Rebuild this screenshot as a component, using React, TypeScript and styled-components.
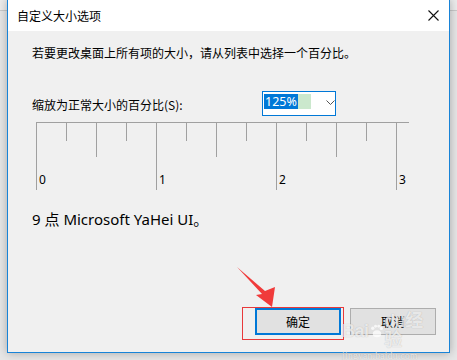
import React from "react";
import styled, { createGlobalStyle } from "styled-components";

const GlobalStyle = createGlobalStyle`
  html, body {
    margin: 0;
    padding: 0;
    width: 457px;
    height: 360px;
    overflow: hidden;
    background: linear-gradient(#ececec 0 10px, #c9c9c9 10px 11px, #e6e6e6 11px);
  }
`;

const CJK = `"Noto Sans CJK SC", "Noto Sans", sans-serif`;

function App() {
  const segments = ["0", "1", "2"];

  return (
    <>
      <GlobalStyle />
      <Page>
        <Dialog>
          <TitleBar>
            <Title>自定义大小选项</Title>
            <CloseIcon width="11" height="11" viewBox="0 0 11 11">
              <path d="M0.5 0.5 L10.5 10.5 M10.5 0.5 L0.5 10.5" stroke="#111" strokeWidth="1.1" />
            </CloseIcon>
          </TitleBar>

          <Body>
            <Intro>若要更改桌面上所有项的大小，请从列表中选择一个百分比。</Intro>

            <ScaleRow>
              <ScaleLabel>缩放为正常大小的百分比(S):</ScaleLabel>
              <Combo>
                <Selected>125%</Selected>
                <SelectTail />
                <Chevron width="9" height="5" viewBox="0 0 9 5">
                  <path d="M0.5 0.5 L4.5 4.5 L8.5 0.5" fill="none" stroke="#555" strokeWidth="1" />
                </Chevron>
              </Combo>
            </ScaleRow>

            <Ruler>
              {segments.map((n) => (
                <Segment key={n}>
                  <Tick $h={18} />
                  <Tick $h={34} />
                  <Tick $h={18} />
                  <RulerLabel>{n}</RulerLabel>
                </Segment>
              ))}
              <Segment $last>
                <RulerLabel>3</RulerLabel>
              </Segment>
            </Ruler>

            <FontInfo>9 点 Microsoft YaHei UI。</FontInfo>

            <ButtonRow>
              <OkWrap>
                <RedBox />
                <Arrow width="50" height="50" viewBox="0 0 50 50">
                  <polygon points="6,5 34,29 44,25 41,45 25,33 31,32" fill="#f03b3b" />
                </Arrow>
                <Button $primary>确定</Button>
              </OkWrap>
              <Button>取消</Button>
              <Watermark aria-hidden="true">
                <MarkBig>
                  Bai
                  <Paw width="15" height="15" viewBox="0 0 15 15">
                    <circle cx="3" cy="4" r="1.8" />
                    <circle cx="6" cy="1.8" r="1.6" />
                    <circle cx="9.5" cy="1.8" r="1.6" />
                    <circle cx="12.3" cy="4.2" r="1.8" />
                    <ellipse cx="7.6" cy="10" rx="4.6" ry="3.8" />
                  </Paw>
                  du经验
                </MarkBig>
                <MarkSmall>jingyan.baidu.com</MarkSmall>
              </Watermark>
            </ButtonRow>
          </Body>
        </Dialog>
      </Page>
    </>
  );
}

const Page = styled.div`
  padding-left: 7px;
  margin-top: -1px;
`;

const Dialog = styled.div`
  box-sizing: border-box;
  width: 443px;
  height: 354px;
  border: 1px solid #1883d7;
  background: #f0f0f0;
  box-shadow: 0 0 9px rgba(0, 0, 0, 0.28);
  display: flex;
  flex-direction: column;
  font-family: ${CJK};
  color: #000;
`;

const TitleBar = styled.div`
  height: 31px;
  background: #fff;
  display: flex;
  align-items: center;
  justify-content: space-between;
  padding: 0 10px 0 9px;
`;

const Title = styled.span`
  font-size: 12px;
  line-height: 16px;
`;

const CloseIcon = styled.svg`
  display: block;
`;

const Body = styled.div`
  flex: 1;
  display: flex;
  flex-direction: column;
  padding: 14px 13px 17px 24px;
`;

const Intro = styled.div`
  font-size: 12px;
  line-height: 16px;
`;

const ScaleRow = styled.div`
  margin-top: 30px;
  display: flex;
  align-items: center;
`;

const ScaleLabel = styled.span`
  width: 230px;
  font-size: 12px;
  line-height: 16px;
  padding-top: 3px;
`;

const Combo = styled.div`
  box-sizing: border-box;
  width: 74px;
  height: 25px;
  border: 1px solid #0078d7;
  background: #fff;
  display: flex;
  align-items: flex-start;
  padding: 2px 0 0 1px;
`;

const Selected = styled.span`
  background: #0078d7;
  color: #fff;
  font-family: "Noto Sans", sans-serif;
  font-size: 12.5px;
  line-height: 15px;
  height: 15px;
  padding: 0 1px;
`;

const SelectTail = styled.span`
  width: 13px;
  height: 15px;
  background: #cbe8cd;
`;

const Chevron = styled.svg`
  display: block;
  margin: 6px 0 0 15px;
`;

const Ruler = styled.div`
  margin: 6px 0 0 4px;
  width: 373px;
  border-top: 1px solid #a0a0a0;
  display: flex;
`;

const Segment = styled.div<{ $last?: boolean }>`
  box-sizing: border-box;
  width: ${(p) => (p.$last ? "13px" : "120px")};
  height: 67px;
  border-left: 1px solid #a0a0a0;
  display: grid;
  grid-template-columns: ${(p) => (p.$last ? "1fr" : "30px 30px 30px 1fr")};
  grid-template-rows: 1fr auto;
`;

const Tick = styled.div<{ $h: number }>`
  box-sizing: border-box;
  height: ${(p) => p.$h}px;
  border-right: 1px solid #a0a0a0;
  align-self: start;
`;

const RulerLabel = styled.span`
  grid-row: 2;
  grid-column: 1 / -1;
  padding: 0 0 3px 2px;
  font-family: "Noto Sans", sans-serif;
  font-size: 12px;
  line-height: 14px;
`;

const FontInfo = styled.div`
  margin-top: 19px;
  font-family: "Noto Sans", "Noto Sans CJK SC", sans-serif;
  font-size: 15px;
  line-height: 20px;
`;

const ButtonRow = styled.div`
  margin-top: auto;
  display: flex;
  justify-content: flex-end;
  gap: 9px;
  position: relative;
`;

const OkWrap = styled.div`
  position: relative;
  display: flex;
`;

const RedBox = styled.div`
  position: absolute;
  left: -13px;
  top: -1px;
  width: 102px;
  height: 33px;
  box-sizing: border-box;
  border: 1px solid #e8393b;
  pointer-events: none;
`;

const Arrow = styled.svg`
  position: absolute;
  left: -24px;
  top: -46px;
`;

const Button = styled.button<{ $primary?: boolean }>`
  box-sizing: border-box;
  width: 86px;
  height: 27px;
  margin: 0;
  padding: 0;
  background: #e1e1e1;
  border: ${(p) => (p.$primary ? "2px solid #0078d7" : "1px solid #adadad")};
  font-family: ${CJK};
  font-size: 12px;
  color: #000;
`;

const Watermark = styled.div`
  position: absolute;
  left: 310px;
  top: 4px;
  display: flex;
  flex-direction: column;
  align-items: flex-start;
  color: rgba(255, 255, 255, 0.72);
  text-shadow: 0 0 1px rgba(0, 0, 0, 0.25);
  pointer-events: none;
`;

const MarkBig = styled.div`
  display: flex;
  align-items: center;
  font-family: "Liberation Sans", ${CJK};
  font-weight: bold;
  font-size: 18px;
  line-height: 19px;
  letter-spacing: -0.5px;
`;

const Paw = styled.svg`
  fill: rgba(255, 255, 255, 0.72);
  margin: 0 1px;
`;

const MarkSmall = styled.div`
  font-family: "Liberation Serif", serif;
  font-size: 9.5px;
  line-height: 10px;
  margin-top: 1px;
  letter-spacing: 0.3px;
`;

export default App;
